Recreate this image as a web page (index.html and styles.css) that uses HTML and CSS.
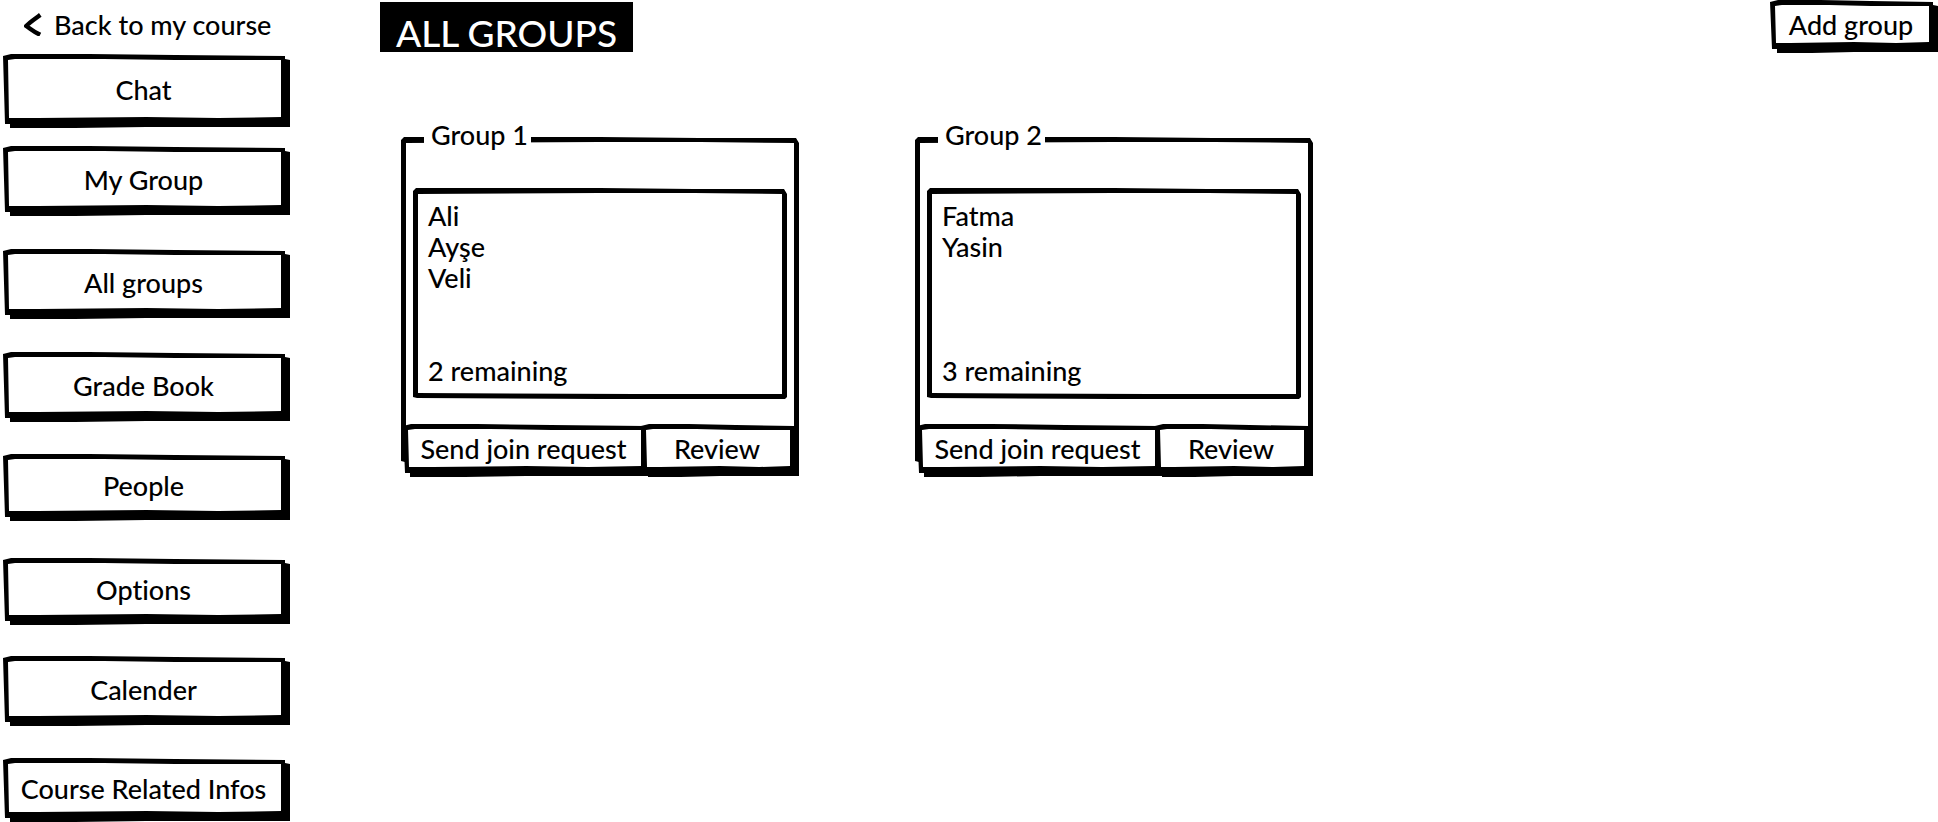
FILE: index.html
```html
<!DOCTYPE html>
<html lang="en">
<head>
<meta charset="utf-8">
<title>All groups</title>
<link rel="stylesheet" href="styles.css">
</head>
<body>
<div class="page">
  <aside class="sidebar">
    <a class="back" href="#course">
      <svg class="back-icon" viewBox="0 0 18 24" aria-hidden="true"><path d="M14.500 4.200C10 7.500 5.500 10.500 2.200 14C6 16.500 9.500 19.500 14.200 21.800" fill="none" stroke="#000" stroke-width="4.400" stroke-linecap="square" stroke-linejoin="round"/></svg>
      <span>Back to my course</span>
    </a>
    <nav class="menu" aria-label="Course">
      <button class="sketch-button tallest" type="button">Chat</button>
      <button class="sketch-button tall" type="button">My Group</button>
      <button class="sketch-button tall" type="button">All groups</button>
      <button class="sketch-button tall" type="button">Grade Book</button>
      <button class="sketch-button medium" type="button">People</button>
      <button class="sketch-button medium" type="button">Options</button>
      <button class="sketch-button tall" type="button">Calender</button>
      <button class="sketch-button short" type="button">Course Related Infos</button>
    </nav>
  </aside>
  <main class="content">
    <header class="top">
      <h1 class="title">ALL GROUPS</h1>
      <button class="sketch-button add" type="button">Add group</button>
    </header>
    <section class="groups">
      <fieldset class="group">
        <legend class="group-name">Group 1</legend>
        <div class="members">
          <ul class="member-list">
            <li>Ali</li>
            <li>Ayşe</li>
            <li>Veli</li>
          </ul>
          <p class="remaining">2 remaining</p>
        </div>
        <div class="actions">
          <button class="sketch-button join" type="button">Send join request</button>
          <button class="sketch-button review" type="button">Review</button>
        </div>
      </fieldset>
      <fieldset class="group">
        <legend class="group-name">Group 2</legend>
        <div class="members">
          <ul class="member-list">
            <li>Fatma</li>
            <li>Yasin</li>
          </ul>
          <p class="remaining">3 remaining</p>
        </div>
        <div class="actions">
          <button class="sketch-button join" type="button">Send join request</button>
          <button class="sketch-button review" type="button">Review</button>
        </div>
      </fieldset>
    </section>
  </main>
</div>
</body>
</html>
```
FILE: styles.css
```css
* {
  box-sizing: border-box;
}

body {
  margin: 0;
  background: #fff;
  color: #000;
  font: 500 27px/31px Lato, "Open Sans", sans-serif;
  font-variant-ligatures: none;
}

button {
  font: inherit;
  font-variant-ligatures: none;
  color: inherit;
}

.page {
  display: flex;
}

/* Sidebar */
.sidebar {
  flex: 0 0 290px;
}

.back {
  display: flex;
  align-items: center;
  gap: 12px;
  height: 54px;
  padding: 0 0 6px 24px;
  color: inherit;
  text-decoration: none;
  white-space: nowrap;
}

.back-icon {
  width: 18px;
  height: 24px;
}

.menu {
  display: grid;
  grid-template-rows: 92px 103px 103px 102px 104px 98px 102px auto;
  align-items: start;
  padding-left: 3px;
}

/* Hand-drawn button: black outline with shadow, white face on top */
.sketch-button {
  position: relative;
  isolation: isolate;
  border: 0;
  padding: 9px 14px 13px 8px;
  background: none;
  white-space: nowrap;
  cursor: pointer;
}

.sketch-button::before,
.sketch-button::after {
  content: "";
  position: absolute;
  inset: 0;
  z-index: -1;
}

.sketch-button::before {
  background: #000;
  clip-path: polygon(0 2px, 8px 0, 30% 0, 60% 1px, calc(100% - 5px) 2px, calc(100% - 5px) 5px, 100% 6px, 100% calc(100% - 1px), 50% calc(100% - 1px), 25% 100%, 7px 100%, 7px calc(100% - 4px), 2px calc(100% - 4px));
}

.sketch-button::after {
  background: #fff;
  clip-path: polygon(5px 6px, 12px 5px, 35% 5px, 60% 6px, calc(100% - 9px) 6px, calc(100% - 9px) calc(100% - 11px), 75% calc(100% - 10px), 50% calc(100% - 11px), 12% calc(100% - 10px), 6px calc(100% - 10px));
}

.tallest {
  min-height: 74px;
}

.tall {
  min-height: 70px;
}

.medium {
  min-height: 67px;
}

.short {
  min-height: 64px;
}

/* Main area */
.content {
  flex: 1;
  min-width: 0;
  padding-left: 90px;
}

.top {
  display: flex;
  justify-content: space-between;
  align-items: flex-start;
}

.title {
  margin: 2px 0 0;
  padding: 11px 16px 0;
  background: #000;
  color: #fff;
  font-size: 37px;
  font-weight: 500;
  line-height: 39px;
}

.add {
  min-width: 168px;
}

.groups {
  display: flex;
  flex-wrap: wrap;
  gap: 32px 116px;
  padding: 66px 0 0 21px;
}

/* Group card: the outline starts level with the lower part of the legend */
.group {
  position: relative;
  isolation: isolate;
  flex: 0 1 398px;
  min-width: 0;
  margin: 0;
  padding: 0;
  border: 0;
}

.group::before,
.group::after,
.members::before,
.members::after {
  content: "";
  position: absolute;
  inset: 0;
  z-index: -1;
}

.group::before,
.members::before {
  background: #000;
  clip-path: polygon(0 3px, 3px 0, 50% 0, 75% 1px, calc(100% - 3px) 1px, 100% 6px, 100% calc(100% - 2px), calc(100% - 2px) 100%, 50% 100%, 4px calc(100% - 1px), 0 calc(100% - 2px));
}

.group::after,
.members::after {
  background: #fff;
  clip-path: polygon(5px 6px, 50% 5px, 75% 5px, calc(100% - 5px) 6px, calc(100% - 5px) calc(100% - 5px), 60% calc(100% - 5px), 5px calc(100% - 6px));
}

.group::before,
.group::after {
  inset: -13px 0 14px;
}

.group-name {
  margin-left: 23px;
  padding: 0 3px 0 7px;
  background: #fff;
}

.members {
  position: relative;
  isolation: isolate;
  display: flex;
  flex-direction: column;
  justify-content: space-between;
  min-height: 211px;
  margin: 38px 12px 25px;
  padding: 12px 15px 13px;
}

.member-list {
  margin: 0;
  padding: 0;
  list-style: none;
}

.remaining {
  margin: 0;
}

.actions {
  display: flex;
  padding-left: 2px;
}

.join {
  flex: 1;
}

.review {
  flex: 0 0 158px;
  margin-left: -9px;
}
```
